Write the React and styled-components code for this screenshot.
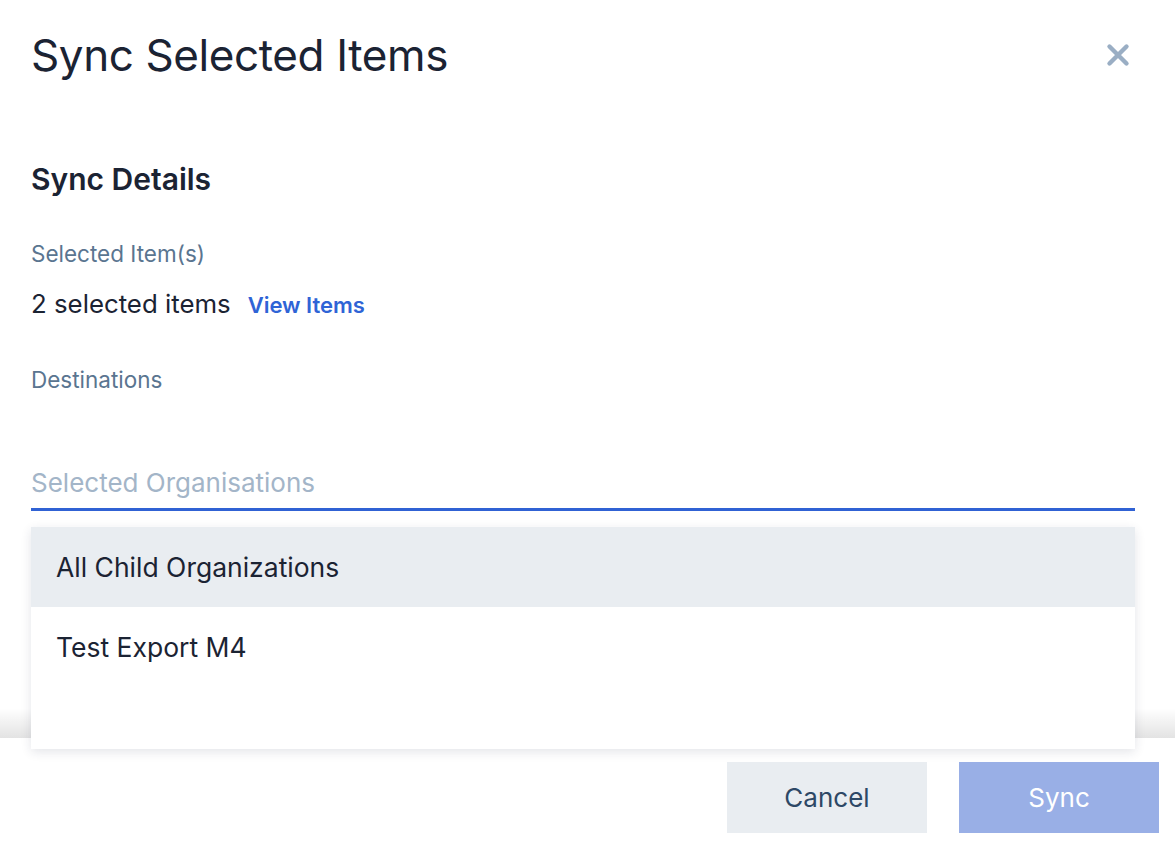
import React from 'react';
import styled, { createGlobalStyle } from 'styled-components';

const GlobalStyle = createGlobalStyle`
  html, body {
    margin: 0;
    padding: 0;
    background: #ffffff;
  }
  body {
    font-family: Inter, "Open Sans", "Liberation Sans", sans-serif;
    color: #1b2333;
  }
`;

const Dialog = styled.div`
  height: 100vh;
  display: flex;
  flex-direction: column;
  overflow: hidden;
`;

const Header = styled.div`
  display: flex;
  align-items: center;
  justify-content: space-between;
  padding: 27px 44px 0 31px;
  height: 56px;
`;

const Title = styled.h1`
  margin: 0;
  font-size: 44px;
  font-weight: 400;
  letter-spacing: -0.4px;
  color: #1b2333;
`;

const CloseButton = styled.button`
  border: 0;
  background: none;
  padding: 0;
  width: 26px;
  height: 26px;
  cursor: pointer;
  display: flex;
  align-items: center;
  justify-content: center;
`;

const Body = styled.div`
  flex: 1;
  padding: 0 40px 0 31px;
  position: relative;
`;

const SectionTitle = styled.h2`
  margin: 79px 0 0;
  font-size: 30px;
  font-weight: 600;
  color: #1b2333;
  line-height: 34px;
`;

const Label = styled.div`
  margin-top: ${p => p.$top}px;
  font-size: 22.5px;
  line-height: 28px;
  color: #5a7590;
`;

const ItemsRow = styled.div`
  display: flex;
  align-items: baseline;
  gap: 17px;
  margin-top: 21px;
  line-height: 30px;
`;

const Count = styled.span`
  font-size: 25.8px;
  color: #1b2333;
`;

const LinkText = styled.a`
  font-size: 22px;
  font-weight: 600;
  color: #2f64d6;
  text-decoration: none;
  cursor: pointer;
`;

const SelectWrap = styled.div`
  position: relative;
  margin-top: 73px;
`;

const Input = styled.input`
  display: block;
  width: 100%;
  box-sizing: border-box;
  border: 0;
  border-bottom: 3px solid #3062d4;
  outline: none;
  padding: 0 0 10px;
  font-family: inherit;
  font-size: 26px;
  color: #1b2333;
  background: transparent;
  &::placeholder {
    color: #a3b5c8;
  }
`;

const Menu = styled.ul`
  position: absolute;
  left: 0;
  right: 0;
  top: calc(100% + 16px);
  margin: 0;
  padding: 0 0 62px;
  list-style: none;
  background: #ffffff;
  box-shadow: 0 3px 10px rgba(30, 45, 70, 0.12);
  z-index: 5;
`;

const Option = styled.li`
  height: 80px;
  display: flex;
  align-items: center;
  padding: 0 25px;
  font-size: 26.5px;
  color: #1b2333;
  background: ${p => (p.$active ? '#e9edf1' : '#ffffff')};
  cursor: pointer;
`;

const Footer = styled.div`
  position: relative;
  display: flex;
  justify-content: flex-end;
  gap: 32px;
  padding: 24px 16px 21px;
  background: #ffffff;
  &::before {
    content: '';
    position: absolute;
    left: 0;
    right: 0;
    top: -30px;
    height: 30px;
    background: linear-gradient(to bottom, rgba(0, 0, 0, 0), rgba(0, 0, 0, 0.11));
  }
`;

const Button = styled.button`
  width: 200px;
  height: 71px;
  border: 0;
  font-family: inherit;
  font-size: 26px;
  cursor: pointer;
  background: ${p => (p.$primary ? '#99afe6' : '#e9edf1')};
  color: ${p => (p.$primary ? '#ffffff' : '#2d4866')};
`;

export default function App() {
  return (
    <Dialog>
      <GlobalStyle />
      <Header>
        <Title>Sync Selected Items</Title>
        <CloseButton aria-label="Close">
          <svg width="24" height="24" viewBox="0 0 24 24">
            <path d="M3.5 3.5 L20.5 20.5 M20.5 3.5 L3.5 20.5" stroke="#9aaec4" strokeWidth="4.4" strokeLinecap="round" />
          </svg>
        </CloseButton>
      </Header>
      <Body>
        <SectionTitle>Sync Details</SectionTitle>
        <Label $top={44}>Selected Item(s)</Label>
        <ItemsRow>
          <Count>2 selected items</Count>
          <LinkText>View Items</LinkText>
        </ItemsRow>
        <Label $top={46}>Destinations</Label>
        <SelectWrap>
          <Input placeholder="Selected Organisations" />
          <Menu>
            <Option $active>All Child Organizations</Option>
            <Option>Test Export M4</Option>
          </Menu>
        </SelectWrap>
      </Body>
      <Footer>
        <Button>Cancel</Button>
        <Button $primary>Sync</Button>
      </Footer>
    </Dialog>
  );
}
